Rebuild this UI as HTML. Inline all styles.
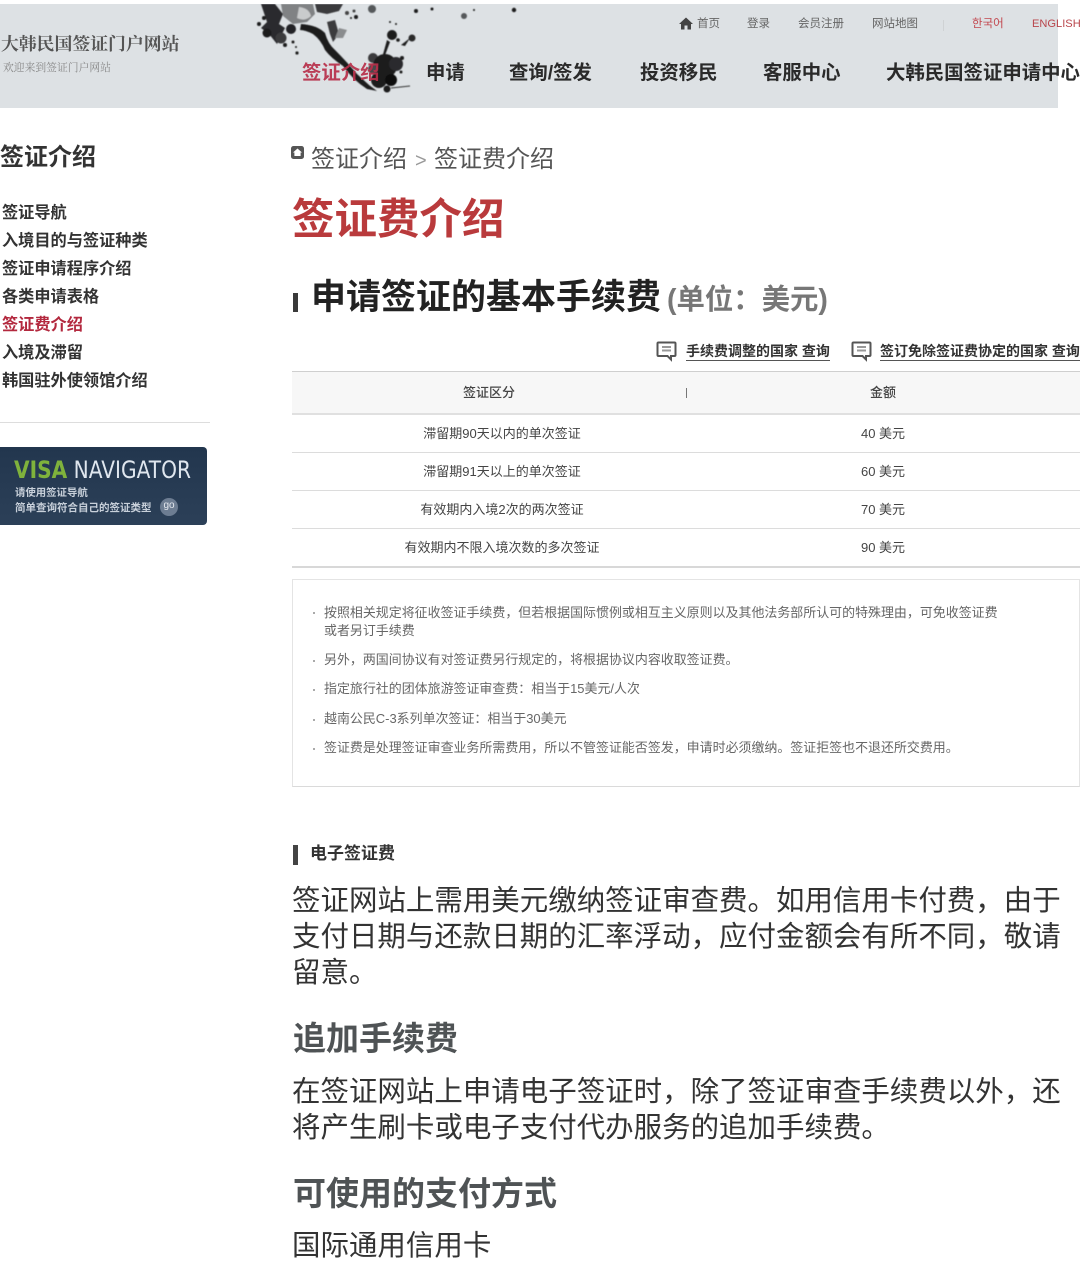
<!DOCTYPE html>
<html lang="zh"><head><meta charset="utf-8"><title>签证费介绍</title>
<style>
html,body{margin:0;padding:0;background:#fff}
body{width:1080px;height:1255px;position:relative;overflow:hidden;font-family:"Liberation Sans","Noto Sans CJK SC",sans-serif;color:#333}
.t{position:absolute;white-space:nowrap;line-height:1.2}
.b{font-weight:700}
.c{transform:translateX(-50%)}
.line{position:absolute;left:292px;width:788px;height:1px;background:#dcdcdc}
.nav{font-size:19.4px;font-weight:700;color:#2a2a2a;top:62px}
.top{font-size:11.5px;color:#666;top:18px}
.side{font-size:16.2px;font-weight:700;left:2px;color:#333}
.td{font-size:13px;color:#444}
.note{font-size:12.96px;color:#666;left:324px}
.dot{position:absolute;left:313px;width:2px;height:2px;background:#aaa}
.body{font-size:28.47px;color:#333;left:292px;line-height:36px}
.h{font-size:33px;font-weight:700;color:#4f5355;left:293px}
.lnk{font-size:14px;font-weight:700;color:#333;top:343px;border-bottom:1px solid #555;line-height:16px;padding-bottom:1px}
</style></head><body>
<div style="position:absolute;left:0;top:4px;width:1058px;height:104px;background:#dde1e4"></div>

<svg style="position:absolute;left:255px;top:4px" width="270" height="96" viewBox="0 4 270 96">
<defs><filter id="s" x="-5%" y="-5%" width="110%" height="110%"><feGaussianBlur stdDeviation=".6"/></filter></defs>
<g fill="#1d1d1f" filter="url(#s)">
<path d="M26 4 L58 4 L60 14 L52 22 L38 24 L28 16Z" fill="#808284"/>
<path d="M44 7 Q54 8 56 16 Q50 22 42 18Z" fill="#c9cbcc"/>
<path d="M60 4 L88 4 L84 11 L72 14 L62 12Z" fill="#3a3a3c"/>
<path d="M6 4 L20 4 L28 14 L24 24 L30 28 L22 44 L14 34 L6 28 L12 22Z" fill="#2b2b2d"/>
<circle cx="4" cy="24" r="2"/><circle cx="9" cy="18" r="2"/>
<circle cx="12" cy="33" r="4.5"/><circle cx="26" cy="38" r="5.5" fill="#3a3a3c"/><circle cx="36" cy="29" r="5" fill="#232325"/><circle cx="42" cy="53" r="1.6"/><circle cx="30" cy="45" r="2"/><circle cx="38" cy="42" r="1.5"/><circle cx="41" cy="47" r="1"/>
<path d="M46 24 Q62 25 70 33 Q73 44 80 50 Q92 62 102 74 L114 85 L122 91 L112 89 Q98 80 88 66 Q76 58 70 50 Q66 40 58 34 Q50 30 45 30Z"/>
<path d="M72 22 L80 20 L84 34 L78 42 L75 34Z" fill="#3a3a3c"/>
<path d="M84 28 L92 30 L88 38 L80 38Z" fill="#8a8c8e"/>
<circle cx="117" cy="9" r="4" fill="#55585a"/><circle cx="137" cy="35" r="5"/><circle cx="143" cy="40" r="1.8"/><circle cx="161" cy="11" r="2"/><circle cx="177" cy="9" r="1.5"/><circle cx="209" cy="16" r="3" fill="#55585a"/><circle cx="219" cy="10" r="1"/><circle cx="259" cy="10" r="2.2"/><circle cx="135" cy="22" r="1"/><circle cx="141" cy="24" r="1"/>
<circle cx="92" cy="13" r="2" fill="#444"/><circle cx="99" cy="11" r="1.5" fill="#444"/><circle cx="101" cy="17" r="2"/><circle cx="96" cy="18" r="1"/>
<circle cx="157" cy="38" r="3.5" fill="#2a2a2c"/>
<path d="M155 38 L146 45 L150 46Z M132 40 L127 58 L129 58 L135 42Z" />
<circle cx="118" cy="58" r="5" fill="#3a3a3c"/><circle cx="130" cy="66" r="12"/><circle cx="141" cy="64" r="7" fill="#2b2b2d"/><circle cx="124" cy="80" r="8"/><circle cx="136" cy="80" r="6" fill="#111"/><circle cx="118" cy="69" r="5" fill="#48494b"/><circle cx="132" cy="89" r="3.5"/><circle cx="146" cy="72" r="1.5"/><circle cx="147" cy="58" r="2"/>
<path d="M136 88 L155 86" stroke="#333" stroke-width="1" fill="none"/>
</g></svg>

<div class="t" style="left:1px;top:33px;font-family:'Noto Serif CJK SC',serif;font-size:17.85px;font-weight:700;color:#555">大韩民国签证门户网站</div>
<div class="t" style="left:3px;top:62px;font-family:'Noto Serif CJK SC',serif;font-size:10.8px;color:#888">欢迎来到签证门户网站</div>

<svg style="position:absolute;left:679px;top:17px" width="14" height="13" viewBox="0 0 14 13"><path d="M7 0.5 L14 7 H12 V12.5 H8.5 V8.5 H5.5 V12.5 H2 V7 H0Z" fill="#444"/></svg>
<div class="t top" style="left:697px">首页</div>
<div class="t top" style="left:747px">登录</div>
<div class="t top" style="left:798px">会员注册</div>
<div class="t top" style="left:872px">网站地图</div>
<div style="position:absolute;left:943px;top:20px;width:1px;height:11px;background:#cfd2d4"></div>
<div class="t top" style="left:972px;color:#c2484f;font-family:'Liberation Sans','Noto Sans CJK KR',sans-serif">한국어</div>
<div class="t top" style="left:1032px;color:#b9464c;font-size:11.1px;top:18px">ENGLISH</div>

<div class="t nav" style="left:302px;color:#b8304a;opacity:.92">签证介绍</div>
<div class="t nav" style="left:426px">申请</div>
<div class="t nav" style="left:509px">查询/签发</div>
<div class="t nav" style="left:640px">投资移民</div>
<div class="t nav" style="left:763px">客服中心</div>
<div class="t nav" style="left:886px">大韩民国签证申请中心</div>

<div class="t b" style="left:0;top:144px;font-size:24px;color:#333">签证介绍</div>
<div class="t side" style="top:204px">签证导航</div>
<div class="t side" style="top:232px">入境目的与签证种类</div>
<div class="t side" style="top:260px">签证申请程序介绍</div>
<div class="t side" style="top:288px">各类申请表格</div>
<div class="t side" style="top:316px;color:#b3283e">签证费介绍</div>
<div class="t side" style="top:344px">入境及滞留</div>
<div class="t side" style="top:372px">韩国驻外使领馆介绍</div>
<div style="position:absolute;left:0;top:422px;width:210px;height:1px;background:#ddd"></div>

<div style="position:absolute;left:0;top:447px;width:207px;height:78px;border-radius:0 4px 4px 0;background:linear-gradient(#22364e,#2c4058)"></div>
<div class="t" style="left:14px;top:456px;font-size:24px;font-family:'DejaVu Sans',sans-serif;color:#dfe6ee;transform-origin:0 0;transform:scaleX(.84)"><span style="color:#7fb23c;font-weight:700">VISA</span> NAVIGATOR</div>
<div class="t" style="left:15px;top:488px;font-size:10.4px;color:#c8d0da;font-weight:700">请使用签证导航</div>
<div class="t" style="left:15px;top:502px;font-size:10.5px;color:#c8d0da;font-weight:700">简单查询符合自己的签证类型</div>
<div class="t" style="left:160px;top:498px;width:18px;height:18px;border-radius:9px;background:#6d7d92;color:#e4e8ee;font-size:10px;line-height:16px;text-align:center">go</div>

<svg style="position:absolute;left:291px;top:146px" width="13" height="13" viewBox="0 0 13 13"><rect width="13" height="13" rx="2.5" fill="#555"/><path d="M6.5 2.5 L11 6.5 H9.6 V10 H3.4 V6.5 H2Z" fill="#fff"/></svg>
<div class="t" style="left:311px;top:146px;font-size:24px;color:#555">签证介绍</div>
<div class="t" style="left:415px;top:149px;font-size:20px;color:#999">&gt;</div>
<div class="t" style="left:434px;top:146px;font-size:24px;color:#555">签证费介绍</div>
<div class="t b" style="left:292px;top:195px;font-size:42.5px;color:#b93a3c">签证费介绍</div>

<div style="position:absolute;left:293px;top:293px;width:5px;height:19px;background:#3a3a3a"></div>
<div class="t b" style="left:311px;top:277px;font-size:35px;color:#222">申请签证的基本手续费</div>
<div class="t b" style="left:667px;top:283px;font-size:28.4px;color:#777">(单位：美元)</div>

<svg style="position:absolute;left:656px;top:341px" width="21" height="21" viewBox="0 0 21 21"><path d="M2.5 1.5 H18.5 Q19.5 1.5 19.5 2.5 V14 Q19.5 15 18.5 15 H15 V18.5 L11.5 15 H2.5 Q1.5 15 1.5 14 V2.5 Q1.5 1.5 2.5 1.5Z" fill="#fff" stroke="#555" stroke-width="2"/><path d="M6 6 H15 M6 9.5 H15" stroke="#999" stroke-width="2"/></svg>
<div class="t lnk" style="left:686px">手续费调整的国家 查询</div>
<svg style="position:absolute;left:851px;top:341px" width="21" height="21" viewBox="0 0 21 21"><path d="M2.5 1.5 H18.5 Q19.5 1.5 19.5 2.5 V14 Q19.5 15 18.5 15 H15 V18.5 L11.5 15 H2.5 Q1.5 15 1.5 14 V2.5 Q1.5 1.5 2.5 1.5Z" fill="#fff" stroke="#555" stroke-width="2"/><path d="M6 6 H15 M6 9.5 H15" stroke="#999" stroke-width="2"/></svg>
<div class="t lnk" style="left:880px;width:200px;overflow:hidden">签订免除签证费协定的国家 查询</div>

<div style="position:absolute;left:292px;top:371px;width:788px;height:41px;background:#f7f7f7;border-top:1px solid #cfcfcf;border-bottom:2px solid #e0e0e0"></div>
<div class="t c" style="left:489px;top:385px;font-size:13px;color:#444;font-weight:500">签证区分</div>
<div style="position:absolute;left:686px;top:388px;width:1px;height:10px;background:#777"></div>
<div class="t c" style="left:883px;top:385px;font-size:13px;color:#444;font-weight:500">金额</div>

<div class="t td c" style="left:502px;top:426px">滞留期90天以内的单次签证</div><div class="t td c" style="left:883px;top:426px">40 美元</div>
<div class="line" style="top:452px"></div>
<div class="t td c" style="left:502px;top:464px">滞留期91天以上的单次签证</div><div class="t td c" style="left:883px;top:464px">60 美元</div>
<div class="line" style="top:490px"></div>
<div class="t td c" style="left:502px;top:502px">有效期内入境2次的两次签证</div><div class="t td c" style="left:883px;top:502px">70 美元</div>
<div class="line" style="top:528px"></div>
<div class="t td c" style="left:502px;top:540px">有效期内不限入境次数的多次签证</div><div class="t td c" style="left:883px;top:540px">90 美元</div>
<div class="line" style="top:566px;height:2px;background:#d8d8d8"></div>

<div style="position:absolute;left:292px;top:579px;width:786px;height:206px;border:1px solid #e4e4e4;border-bottom-color:#dadada"></div>
<div class="dot" style="top:612px"></div><div class="t note" style="top:605px">按照相关规定将征收签证手续费，但若根据国际惯例或相互主义原则以及其他法务部所认可的特殊理由，可免收签证费</div>
<div class="t note" style="top:623px">或者另订手续费</div>
<div class="dot" style="top:660px"></div><div class="t note" style="top:652px">另外，两国间协议有对签证费另行规定的，将根据协议内容收取签证费。</div>
<div class="dot" style="top:689px"></div><div class="t note" style="top:681px">指定旅行社的团体旅游签证审查费：相当于15美元/人次</div>
<div class="dot" style="top:719px"></div><div class="t note" style="top:711px">越南公民C-3系列单次签证：相当于30美元</div>
<div class="dot" style="top:748px"></div><div class="t note" style="top:740px">签证费是处理签证审查业务所需费用，所以不管签证能否签发，申请时必须缴纳。签证拒签也不退还所交费用。</div>

<div style="position:absolute;left:293px;top:845px;width:5px;height:20px;background:#444"></div>
<div class="t b" style="left:310px;top:844px;font-size:17px;color:#333">电子签证费</div>
<div class="t body" style="top:883px">签证网站上需用美元缴纳签证审查费。如用信用卡付费，由于</div>
<div class="t body" style="top:919px">支付日期与还款日期的汇率浮动，应付金额会有所不同，敬请</div>
<div class="t body" style="top:955px">留意。</div>
<div class="t h" style="top:1019px">追加手续费</div>
<div class="t body" style="top:1074px">在签证网站上申请电子签证时，除了签证审查手续费以外，还</div>
<div class="t body" style="top:1110px">将产生刷卡或电子支付代办服务的追加手续费。</div>
<div class="t h" style="top:1174px">可使用的支付方式</div>
<div class="t body" style="top:1228px">国际通用信用卡</div>
</body></html>
